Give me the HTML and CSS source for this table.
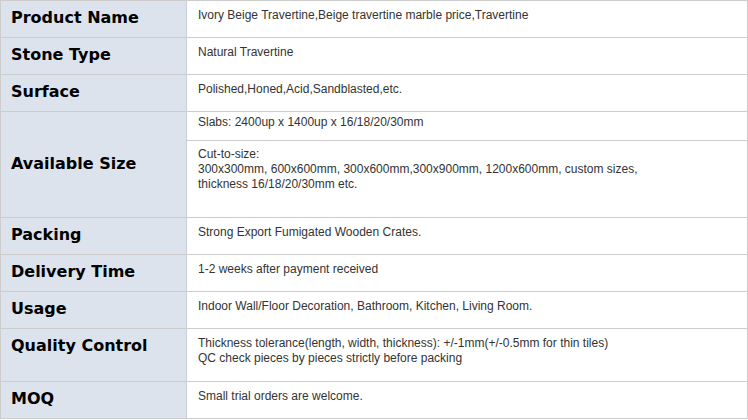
FILE: index.html
```html
<!DOCTYPE html>
<html>
<head>
<meta charset="utf-8">
<link rel="stylesheet" href="styles.css">
</head>
<body>
<div class="spec">
  <div class="row">
    <div class="label">Product Name</div>
    <div class="value">Ivory Beige Travertine,Beige travertine marble price,Travertine</div>
  </div>
  <div class="row">
    <div class="label">Stone Type</div>
    <div class="value">Natural Travertine</div>
  </div>
  <div class="row">
    <div class="label">Surface</div>
    <div class="value">Polished,Honed,Acid,Sandblasted,etc.</div>
  </div>
  <div class="row row-size">
    <div class="label">Available Size</div>
    <div class="value value-split">
      <div class="sub sub-slabs">Slabs: 2400up x 1400up x 16/18/20/30mm</div>
      <div class="sub sub-cut">Cut-to-size:<br>300x300mm, 600x600mm, 300x600mm,300x900mm, 1200x600mm, custom sizes,<br>thickness 16/18/20/30mm etc.</div>
    </div>
  </div>
  <div class="row">
    <div class="label">Packing</div>
    <div class="value">Strong Export Fumigated Wooden Crates.</div>
  </div>
  <div class="row">
    <div class="label">Delivery Time</div>
    <div class="value">1-2 weeks after payment received</div>
  </div>
  <div class="row">
    <div class="label">Usage</div>
    <div class="value">Indoor Wall/Floor Decoration, Bathroom, Kitchen, Living Room.</div>
  </div>
  <div class="row row-qc">
    <div class="label label-top">Quality Control</div>
    <div class="value">Thickness tolerance(length, width, thickness): +/-1mm(+/-0.5mm for thin tiles)<br>QC check pieces by pieces strictly before packing</div>
  </div>
  <div class="row">
    <div class="label">MOQ</div>
    <div class="value">Small trial orders are welcome.</div>
  </div>
</div>
</body>
</html>
```

FILE: styles.css
```css
html, body {
  margin: 0;
  padding: 0;
  background: #ffffff;
}

.spec {
  width: 748px;
  box-sizing: border-box;
  border: 1px solid #cccccc;
  border-bottom: 0;
}

.row {
  display: grid;
  grid-template-columns: 186px 1fr;
  border-bottom: 1px solid #cccccc;
  min-height: 36px;
}

.label {
  display: flex;
  align-items: center;
  box-sizing: border-box;
  padding: 7px 10px 9px;
  background: #dce3ed;
  border-right: 1px solid #c9cfd8;
  font-family: "DejaVu Sans", Verdana, sans-serif;
  font-weight: bold;
  font-size: 16px;
  line-height: 20px;
  color: #000000;
}

.label-top {
  align-items: flex-start;
}

.value {
  padding: 7px 10px 0 11px;
  font-family: "Liberation Sans", Arial, sans-serif;
  font-size: 12px;
  line-height: 15px;
  color: #333333;
}

.value-split {
  padding: 0;
  display: flex;
  flex-direction: column;
}

.sub {
  padding: 3px 10px 10px 11px;
}

.sub-slabs {
  border-bottom: 1px solid #cccccc;
}

.sub-cut {
  padding: 6px 10px 25px 11px;
}

.row-qc {
  min-height: 52px;
}
```
